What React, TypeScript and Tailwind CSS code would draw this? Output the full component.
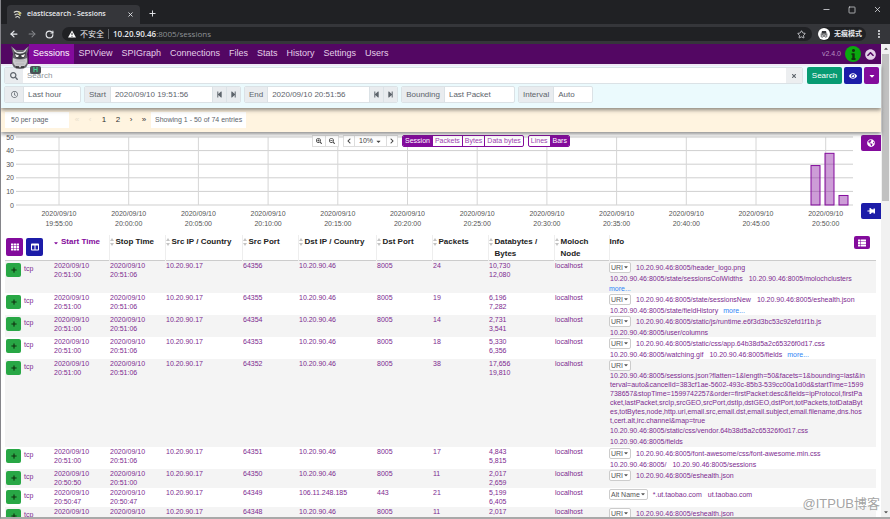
import type { ReactNode } from "react";
import {
  FaCaretDown,
  FaChevronCircleUp,
  FaChevronLeft,
  FaChevronRight,
  FaColumns,
  FaEye,
  FaGlobeAmericas,
  FaInfo,
  FaPlus,
  FaRegClock,
  FaSearch,
  FaSearchMinus,
  FaSearchPlus,
  FaStepBackward,
  FaStepForward,
  FaTh,
  FaThList,
  FaThumbtack,
  FaTimes,
} from "react-icons/fa";
import { ArrowLeft, ArrowRight, EllipsisVertical, Minus, Plus, RotateCw, Square, Star, X } from "lucide-react";

const NAV = ["Sessions", "SPIView", "SPIGraph", "Connections", "Files", "Stats", "History", "Settings", "Users"];

const HOST = "10.20.90.46:8005";

type Session = {
  start?: string;
  stop?: string;
  srcPort: string;
  dst?: string;
  dstPort?: string;
  packets: number;
  dataBytes: string;
  bytes?: string;
  field?: string;
  info: string[][];
  long?: string[];
};

const SESSIONS: Session[] = [
  {
    start: "20:51:00", stop: "20:51:06", srcPort: "64356", packets: 24, dataBytes: "10,730", bytes: "12,080",
    info: [[HOST + "/header_logo.png"], [HOST + "/state/sessionsColWidths", HOST + "/molochclusters"], ["more..."]],
  },
  {
    start: "20:51:00", stop: "20:51:06", srcPort: "64355", packets: 19, dataBytes: "6,196", bytes: "7,282",
    info: [[HOST + "/state/sessionsNew", HOST + "/eshealth.json"], [HOST + "/state/fieldHistory", "more..."]],
  },
  {
    start: "20:51:00", stop: "20:51:06", srcPort: "64354", packets: 14, dataBytes: "2,731", bytes: "3,541",
    info: [[HOST + "/static/js/runtime.e6f3d3bc53c92efd1f1b.js"], [HOST + "/user/columns"]],
  },
  {
    start: "20:51:00", stop: "20:51:06", srcPort: "64353", packets: 18, dataBytes: "5,330", bytes: "6,356",
    info: [[HOST + "/static/css/app.64b38d5a2c65326f0d17.css"], [HOST + "/watching.gif", HOST + "/fields", "more..."]],
  },
  {
    start: "20:51:00", stop: "20:51:06", srcPort: "64352", packets: 38, dataBytes: "17,656", bytes: "19,810",
    long: [
      HOST + "/sessions.json?flatten=1&length=50&facets=1&bounding=last&in",
      "terval=auto&cancelId=383cf1ae-5602-493c-85b3-539cc00a1d0d&startTime=1599",
      "738657&stopTime=1599742257&order=firstPacket:desc&fields=ipProtocol,firstPa",
      "cket,lastPacket,srcIp,srcGEO,srcPort,dstIp,dstGEO,dstPort,totPackets,totDataByt",
      "es,totBytes,node,http.uri,email.src,email.dst,email.subject,email.filename,dns.hos",
      "t,cert.alt,irc.channel&map=true",
    ],
    info: [[], [HOST + "/static/css/vendor.64b38d5a2c65326f0d17.css"], [HOST + "/fields"]],
  },
  {
    start: "20:51:00", stop: "20:51:06", srcPort: "64351", packets: 17, dataBytes: "4,843", bytes: "5,815",
    info: [[HOST + "/font-awesome/css/font-awesome.min.css"], [HOST + "/", HOST + "/sessions"]],
  },
  {
    start: "20:50:50", stop: "20:51:00", srcPort: "64350", packets: 11, dataBytes: "2,017", bytes: "2,659",
    info: [[HOST + "/eshealth.json"]],
  },
  {
    start: "20:50:47", stop: "20:50:47", srcPort: "64349", dst: "106.11.248.185", dstPort: "443", packets: 21,
    dataBytes: "5,199", bytes: "6,405", field: "Alt Name",
    info: [["*.ut.taobao.com", "ut.taobao.com"]],
  },
  {
    srcPort: "64348", packets: 11, dataBytes: "2,017",
    info: [[HOST + "/eshealth.json"]],
  },
];

const COLUMNS = ["Stop Time", "Src IP / Country", "Src Port", "Dst IP / Country", "Dst Port", "Packets", "Databytes / Bytes", "Moloch Node"];

function Browser() {
  return (
    <header className="shrink-0 bg-[#202124] font-['Open_Sans','Noto_Sans_CJK_SC',sans-serif] text-[#e8eaed]">
      <div className="flex h-6 items-end pl-1.5">
        <div className="flex h-[19px] w-[133px] items-center rounded-t bg-[#35363a] px-1.5 text-[7px] font-semibold">
          <svg viewBox="0 0 12 12" className="mr-1 size-2.5" fill="none">
            <path d="M1 3 Q5 0 10 4 M2 6 Q6 3 9 7 M3 9 Q6 6 8 10" stroke="#d8d8d0" strokeWidth="1.3" />
            <path d="M6 2l4 2-2 3z" fill="#c9c05f" />
          </svg>
          <span className="grow">elasticsearch - Sessions</span>
          <button aria-label="Close tab"><X size={7} strokeWidth={3} /></button>
        </div>
        <button aria-label="New tab" className="mb-1.5 ml-2"><Plus size={9} strokeWidth={2.5} /></button>
        <div className="mb-2.5 ml-auto flex gap-[17px] pr-2">
          <button aria-label="Minimize"><Minus size={9} /></button>
          <button aria-label="Maximize"><Square size={8} /></button>
          <button aria-label="Close"><X size={9} /></button>
        </div>
      </div>
      <div className="flex h-5 items-center bg-[#35363a] pr-1.5 pl-2 text-[8px]">
        <button aria-label="Back"><ArrowLeft size={10} strokeWidth={3} /></button>
        <button aria-label="Forward" className="ml-2 text-[#85878b]"><ArrowRight size={10} strokeWidth={2.5} /></button>
        <button aria-label="Reload" className="ml-2"><RotateCw size={9} strokeWidth={3} /></button>
        <div className="ml-2 flex h-3.5 grow items-center rounded-full bg-[#202124] pr-1.5 pl-1.5">
          <svg viewBox="0 0 10 9" className="size-2">
            <path d="M5 0L10 9H0z" fill="#fff" />
            <path d="M5 3v3M5 7v1" stroke="#202124" strokeWidth="1.2" />
          </svg>
          <span className="ml-1">不安全</span>
          <span className="mx-1 h-2.5 w-px bg-[#5f6368]" />
          <span className="font-semibold">10.20.90.46</span>
          <span className="grow text-[#8f9296]">:8005/sessions</span>
          <button aria-label="Bookmark"><Star size={9} /></button>
        </div>
        <div className="mr-2 ml-1.5 flex h-3.5 items-center gap-1 rounded-full bg-[#202124] pr-1">
          <svg viewBox="0 0 12 12" className="size-3">
            <circle cx="6" cy="6" r="6" fill="#fff" />
            <path d="M4 3h4l.6 2.4H3.4zM2.5 5.8h7v.7h-7z" fill="#35363a" />
            <path d="M3 8a1.2 1.2 0 1 0 2.4 0 1.2 1.2 0 1 0-2.4 0M6.6 8A1.2 1.2 0 1 0 9 8a1.2 1.2 0 1 0-2.4 0M5.4 8h1.2" stroke="#35363a" strokeWidth=".7" fill="none" />
          </svg>
          <span className="text-[7px] font-bold">无痕模式</span>
        </div>
        <button aria-label="Menu"><EllipsisVertical size={10} strokeWidth={3} /></button>
      </div>
    </header>
  );
}

function Owl() {
  return (
    <svg viewBox="0 0 18 23" className="relative z-10 mt-0.5 ml-2.5 h-[23px] w-[18px]">
      <path d="M0 0l5 4h8l5-4-2 8 1 6q1 9-8 9t-8-9l1-6z" fill="#68686e" />
      <path d="M1 1l5 5h6l5-5-3 5q-5 3-10 0z" fill="#e2e2e4" />
      <path d="M3 6q6 4 12 0l-1 5q-5 4-10 0z" fill="#3c3c40" />
      <path d="M4 8l4 1.5-1 1.5H5zM14 8l-4 1.5 1 1.5h2z" fill="#f0f0f0" />
      <path d="M2 12q7 3 14 0v4q-1 5-7 5t-7-5z" fill="#c9c9cb" />
      <path d="M4 15h10M5 18h8" stroke="#b0b0b4" strokeWidth=".8" />
      <path d="M5 21h3M10 21h3" stroke="#2c2c2e" strokeWidth="1.5" />
    </svg>
  );
}

function NavBar() {
  return (
    <nav className="flex h-5 shrink-0 bg-[#530763] text-[9px] text-[#e3cfe8]">
      <Owl />
      <div className="flex gap-px">
        {NAV.map((item) => (
          <a
            key={item}
            href="#"
            className={item === "Sessions" ? "flex items-center bg-[#830b9c] px-1 text-white" : "flex items-center px-1"}
          >
            {item}
          </a>
        ))}
      </div>
      <div className="ml-auto flex items-center pr-[5px]">
        <span className="mr-1 text-[7px] text-[#b78fc0]">v2.4.0</span>
        <span className="mr-1 flex size-4 items-center justify-center rounded-full bg-[#0ba80f] text-[#12350f]">
          <FaInfo size={11} />
        </span>
        <button aria-label="Collapse" className="text-[#e3cfe8]"><FaChevronCircleUp size={11} /></button>
      </div>
    </nav>
  );
}

function Group({ label, children }: { label: ReactNode; children: ReactNode }) {
  return (
    <div className="flex h-[17px] overflow-hidden rounded-xs border border-[#dbe2e6] bg-white">
      <span className="flex items-center border-r border-[#dbe2e6] bg-[#e9ecef] px-1">{label}</span>
      {children}
    </div>
  );
}

function TimeInput({ label, id, value }: { label: string; id: string; value: string }) {
  return (
    <Group label={<label htmlFor={id}>{label}</label>}>
      <input id={id} defaultValue={value} className="w-[101px] px-1 outline-none" />
      <button aria-label={label + " step back"} className="flex w-3.5 items-center justify-center border-l border-[#dbe2e6] bg-[#e9ecef]">
        <FaStepBackward size={7} />
      </button>
      <button aria-label={label + " step forward"} className="flex w-3.5 items-center justify-center border-l border-[#dbe2e6] bg-[#e9ecef]">
        <FaStepForward size={7} />
      </button>
    </Group>
  );
}

function SearchArea() {
  return (
    <section className="relative z-[5] h-11 shrink-0 border-t-2 border-[#efe9f5] bg-[#ebfafd] pt-px pr-0.5 pl-[3px] text-[8px] text-[#5d646b] shadow-[0_2px_4px_rgba(60,60,60,0.6)]">
      <div className="flex h-[17px] gap-0.5">
        <div className="mr-0.5 flex grow overflow-hidden rounded-xs border border-[#dbe2e6] bg-white">
          <label htmlFor="search" className="flex w-[18px] items-center justify-center bg-[#e9ecef]">
            <FaSearch size={8} aria-label="Search" />
          </label>
          <input id="search" placeholder="Search" className="grow px-1 outline-none placeholder:text-[#8d949a]" />
          <button aria-label="Clear" className="flex w-4 items-center justify-center bg-[#eceef0]"><FaTimes size={6} /></button>
        </div>
        <button className="w-[35px] rounded-xs bg-[#079b72] text-white">Search</button>
        <button aria-label="View" className="flex w-[18px] items-center justify-center rounded-xs bg-[#1c1ca8] text-white"><FaEye size={8} /></button>
        <button aria-label="Actions" className="flex w-[15px] items-center justify-center rounded-xs bg-[#830b9c] text-white"><FaCaretDown size={8} /></button>
      </div>
      <div className="mt-0.5 flex gap-[3px]">
        <Group label={<span className="flex w-2.5 justify-center"><FaRegClock size={7} /></span>}>
          <select aria-label="Time range" className="w-14 appearance-none px-1 outline-none">
            <option>Last hour</option>
          </select>
        </Group>
        <TimeInput label="Start" id="start" value="2020/09/10 19:51:56" />
        <TimeInput label="End" id="end" value="2020/09/10 20:51:56" />
        <Group label={<label htmlFor="bounding">Bounding</label>}>
          <select id="bounding" className="w-[69px] appearance-none px-1 outline-none">
            <option>Last Packet</option>
          </select>
        </Group>
        <Group label={<label htmlFor="interval">Interval</label>}>
          <select id="interval" className="w-[38px] appearance-none px-1 outline-none">
            <option>Auto</option>
          </select>
        </Group>
      </div>
      {/* history hint that hangs over the search box */}
      <div className="absolute top-0 left-[29px] flex h-2 w-[11px] items-center justify-center rounded-xs bg-[#4c5156] text-[7px] font-bold text-[#3fd08e]">
        H
      </div>
    </section>
  );
}

function Pager() {
  return (
    <section className="relative z-[4] flex h-6 shrink-0 items-center bg-[#fff4e0] pl-1 text-[7px] text-[#5d646b] shadow-[0_2px_4px_rgba(60,60,60,0.6)]">
      <select aria-label="Page size" className="h-4 w-16 appearance-none bg-white px-1.5 outline-none">
        <option>50 per page</option>
      </select>
      <div className="ml-0.5 flex text-[8px] text-[#333]">
        <button className="w-3 text-[#e9dfcd]">«</button>
        <button className="w-3.5 text-[#e9dfcd]">‹</button>
        <button className="w-3.5">1</button>
        <button className="w-3.5">2</button>
        <button className="w-3">›</button>
        <button className="w-3.5">»</button>
      </div>
      <span className="flex h-4 items-center bg-white px-1">Showing 1 - 50 of 74 entries</span>
    </section>
  );
}

const TICKS = ["19:55:00", "20:00:00", "20:05:00", "20:10:00", "20:15:00", "20:20:00", "20:25:00", "20:30:00", "20:35:00", "20:40:00", "20:45:00", "20:50:00"];
const BARS = [
  { x: 810, sessions: 29 },
  { x: 824, sessions: 38 },
  { x: 838, sessions: 7 },
];

// chart columns are given on an 880 wide scale and follow the panel
const pct = (x: number) => (x / 880) * 100 + "%";

function Toggle({ items, active }: { items: string[]; active: string }) {
  return (
    <div className="flex h-3 overflow-hidden rounded-xs border border-[#830b9c] bg-white">
      {items.map((item) => (
        <label
          key={item}
          className="flex items-center border-l border-[#830b9c] px-0.5 text-[#9c41b0] first:border-l-0 has-checked:bg-[#830b9c] has-checked:text-white"
        >
          <input type="radio" name={items[0]} defaultChecked={item === active} className="sr-only" />
          {item}
        </label>
      ))}
    </div>
  );
}

function Chart() {
  return (
    <section className="relative h-[98px] shrink-0">
      <svg width="100%" height="98" className="text-[7px]" fill="#555">
        {[50, 40, 30, 20, 10, 0].map((v) => {
          const y = 73 - v * 1.36;
          return (
            <g key={v}>
              <line x1={pct(15)} x2={pct(852)} y1={y} y2={y} stroke="#cfcfcf" />
              <text x="13" y={y + 2.5} textAnchor="end">{v}</text>
            </g>
          );
        })}
        {TICKS.map((t, i) => {
          const x = pct(58 + i * 69.7);
          return (
            <g key={t} textAnchor="middle">
              <line x1={x} x2={x} y1="5" y2="73" stroke="#d6d6d6" />
              <text x={x} y="84">2020/09/10</text>
              <text x={x} y="94">{t}</text>
            </g>
          );
        })}
        {BARS.map((b) => (
          <rect
            key={b.x}
            x={pct(b.x)}
            y={73 - b.sessions * 1.36}
            width={pct(9)}
            height={b.sessions * 1.36}
            fill="#830b9c"
            fillOpacity="0.4"
            stroke="#830b9c"
          />
        ))}
      </svg>
      <div className="absolute inset-x-0 top-[3px] flex justify-center text-[7px] text-[#444]">
        <div className="flex h-3 divide-x divide-[#ddd] border border-[#ddd] bg-white">
          <button aria-label="Zoom in" className="px-[3px]"><FaSearchPlus size={6} /></button>
          <button aria-label="Zoom out" className="px-[3px]"><FaSearchMinus size={6} /></button>
        </div>
        <div className="mx-1 flex h-3 divide-x divide-[#ddd] border border-[#ddd] bg-white">
          <button aria-label="Pan left" className="px-0.5"><FaChevronLeft size={6} /></button>
          <button className="flex items-center gap-0.5 px-1">10% <FaCaretDown size={7} /></button>
          <button aria-label="Pan right" className="px-0.5"><FaChevronRight size={6} /></button>
        </div>
        <Toggle items={["Session", "Packets", "Bytes", "Data bytes"]} active="Session" />
        <div className="w-1" />
        <Toggle items={["Lines", "Bars"]} active="Bars" />
      </div>
      <div className="absolute inset-y-0 right-0 flex flex-col justify-between pt-[3px] pb-[11px] text-white">
        <button aria-label="Show map" className="flex h-4 w-5 items-center justify-center rounded-l-xs bg-[#830b9c]"><FaGlobeAmericas size={8} /></button>
        <button aria-label="Pin charts" className="flex h-4 w-5 items-center justify-center rounded-l-xs bg-[#1c1ca8]"><FaThumbtack size={8} className="rotate-90" /></button>
      </div>
    </section>
  );
}

function SortIcon() {
  return (
    <svg viewBox="0 0 4 8" className="mt-0.5 h-2 w-1 shrink-0" fill="#c4c4c4">
      <path d="M0 3L2 0l2 3zM0 5h4L2 8z" />
    </svg>
  );
}

function Info({ session }: { session: Session }) {
  return (
    <>
      {session.info.map((line, i) => (
        <div key={i}>
          <div className={i === 0 ? "flex h-3 items-center gap-1" : session.long ? "flex h-[11px] items-center gap-1" : "flex h-2.5 items-center gap-1"}>
            {i === 0 && (
              <button className="flex h-[11px] items-center rounded-xs border border-[#ccc] bg-white px-px whitespace-nowrap text-[#555]">
                {session.field ?? "URI"} <FaCaretDown size={6} />
              </button>
            )}
            {line.map((text) =>
              text === "more..." ? (
                <a key={text} href="#" className="text-[#2f86f6]">{text}</a>
              ) : (
                <span key={text} className="px-px whitespace-nowrap">{text}</span>
              ),
            )}
          </div>
          {i === 0 && session.long && <p className="pl-px whitespace-pre">{session.long.join("\n")}</p>}
        </div>
      ))}
    </>
  );
}

function SessionTable() {
  return (
    <div className="min-h-0 grow overflow-hidden pr-[5px] pl-1">
      <table className="w-full table-fixed border-collapse text-left text-[7px] leading-[9px] text-[#7d2a90]">
        <colgroup>
          <col className="w-[19px]" />
          <col className="w-[29px]" />
          <col className="w-14" />
          <col className="w-14" />
          <col className="w-[77px]" />
          <col className="w-14" />
          <col className="w-[78px]" />
          <col className="w-14" />
          <col className="w-14" />
          <col className="w-[66px]" />
          <col className="w-[55px]" />
          <col />
        </colgroup>
        <thead className="align-top text-[8px] leading-[12px] text-[#222]">
          <tr className="h-[25px] border-b border-[#ccc]">
            <th colSpan={2} className="p-0 pt-[3px]">
              <div className="flex gap-[3px] pl-px text-white">
                <button aria-label="Toggle columns" className="flex h-[18px] w-[17px] items-center justify-center rounded-xs bg-[#830b9c]"><FaTh size={8} /></button>
                <button aria-label="Column layouts" className="flex h-[18px] w-[17px] items-center justify-center rounded-xs bg-[#1c1ca8]"><FaColumns size={8} /></button>
              </div>
            </th>
            <th className="p-0 pt-px">
              <div className="flex gap-0.5 text-[#830b9c]">
                <FaCaretDown size={6} className="mt-1 shrink-0" />
                Start Time
              </div>
            </th>
            {COLUMNS.map((name) => (
              <th key={name} className="border-l border-[#eee] p-0 pt-px">
                <div className="flex gap-0.5"><SortIcon />{name}</div>
              </th>
            ))}
            <th className="border-l border-[#eee] p-0 pt-px">
              <div className="flex justify-between pr-1.5">
                Info
                <button aria-label="Info fields" className="flex h-[13px] w-4 items-center justify-center rounded-xs bg-[#830b9c] text-white"><FaThList size={8} /></button>
              </div>
            </th>
          </tr>
        </thead>
        <tbody className="align-top">
          {SESSIONS.map((s) => (
            <tr key={s.srcPort} className="h-[19px] odd:bg-[#f4f4f4]">
              <td className="p-0 pt-0.5 pl-px">
                <button aria-label="Open session" className="flex h-3.5 w-[15px] items-center justify-center rounded-xs bg-[#28a745] text-[#10300f]"><FaPlus size={6} /></button>
              </td>
              <td className="p-0 pt-[3px]">tcp</td>
              <td className="p-0 pl-px">2020/09/10{s.start && <><br />{s.start}</>}</td>
              <td className="p-0 pl-px">2020/09/10{s.stop && <><br />{s.stop}</>}</td>
              <td className="p-0 pl-px">10.20.90.17</td>
              <td className="p-0 pl-px">{s.srcPort}</td>
              <td className="p-0 pl-px">{s.dst ?? "10.20.90.46"}</td>
              <td className="p-0 pl-px">{s.dstPort ?? "8005"}</td>
              <td className="p-0 pl-px">{s.packets}</td>
              <td className="p-0 pl-px">{s.dataBytes}{s.bytes && <><br />{s.bytes}</>}</td>
              <td className="p-0 pl-px">localhost</td>
              <td className="p-0"><Info session={s} /></td>
            </tr>
          ))}
        </tbody>
      </table>
    </div>
  );
}

export default function App() {
  return (
    <div className="relative flex h-screen flex-col overflow-hidden border-b-2 border-l border-b-[#a9a9a9] border-l-[#85858a] bg-white font-['Liberation_Sans','Noto_Sans_CJK_SC',sans-serif]">
      <Browser />
      <div className="flex min-h-0 grow">
        <main className="flex min-w-0 grow flex-col">
          <NavBar />
          <SearchArea />
          <Pager />
          <Chart />
          <div className="h-[5px] shrink-0" />
          <SessionTable />
        </main>
        <div className="flex w-[9px] shrink-0 flex-col items-center bg-[#f1f1f1] text-[#555]">
          <FaCaretDown size={6} className="my-0.5 rotate-180" />
          <div className="h-[147px] w-[7px] bg-[#c1c1c1]" />
          <FaCaretDown size={6} className="mt-auto mb-0.5" />
        </div>
      </div>
      <div className="pointer-events-none absolute right-2.5 bottom-1 text-[13px] text-[#8c8c8c]/80">@ITPUB博客</div>
    </div>
  );
}
